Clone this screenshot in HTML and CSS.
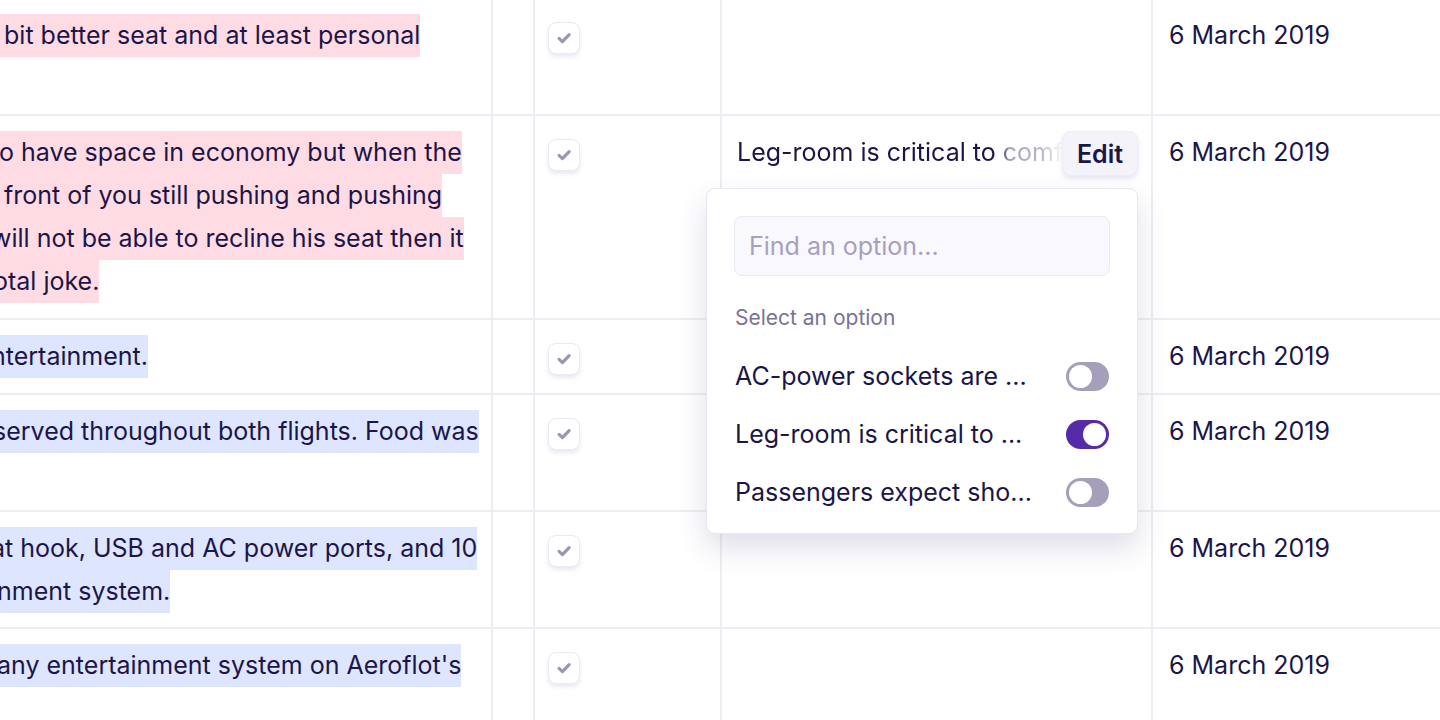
FILE: index.html
```html
<!DOCTYPE html>
<html lang="en">
<head>
<meta charset="utf-8">
<title>Reviews</title>
<link rel="stylesheet" href="styles.css">
</head>
<body>
<div class="table">
  <div class="row tight">
    <div class="cell quote"><div class="lines">
      <span class="ln pink">&nbsp;bit better seat and at least personal</span>
      <span class="ln blank">&nbsp;</span>
    </div></div>
    <div class="cell narrow"></div>
    <div class="cell check"><span class="box"><svg viewBox="0 0 16 16" width="18" height="18"><path d="M3.6 8.4 L6.6 11.2 L12.6 5" fill="none" stroke="#9c94b4" stroke-width="2.8" stroke-linecap="round" stroke-linejoin="round"/></svg></span></div>
    <div class="cell theme"></div>
    <div class="cell date">6 March 2019</div>
  </div>
  <div class="row">
    <div class="cell quote"><div class="lines">
      <span class="ln pink cut6">to have space in economy but when the</span>
      <span class="ln pink">&nbsp;front of you still pushing and pushing</span>
      <span class="ln pink cut6">will not be able to recline his seat then it</span>
      <span class="ln pink cut4">otal joke.</span>
    </div></div>
    <div class="cell narrow"></div>
    <div class="cell check"><span class="box"><svg viewBox="0 0 16 16" width="18" height="18"><path d="M3.6 8.4 L6.6 11.2 L12.6 5" fill="none" stroke="#9c94b4" stroke-width="2.8" stroke-linecap="round" stroke-linejoin="round"/></svg></span></div>
    <div class="cell theme active">
      <div class="theme-text">Leg-room is critical to comfort</div>
      <button class="edit">Edit</button>
      <div class="popover">
        <input class="search" type="text" placeholder="Find an option...">
        <div class="pop-label">Select an option</div>
        <div class="option"><span class="opt-text">AC-power sockets are ...</span><span class="toggle"></span></div>
        <div class="option"><span class="opt-text">Leg-room is critical to ...</span><span class="toggle on"></span></div>
        <div class="option"><span class="opt-text">Passengers expect sho...</span><span class="toggle"></span></div>
      </div>
    </div>
    <div class="cell date">6 March 2019</div>
  </div>
  <div class="row">
    <div class="cell quote"><div class="lines">
      <span class="ln blue cut6">ntertainment.</span>
    </div></div>
    <div class="cell narrow"></div>
    <div class="cell check"><span class="box"><svg viewBox="0 0 16 16" width="18" height="18"><path d="M3.6 8.4 L6.6 11.2 L12.6 5" fill="none" stroke="#9c94b4" stroke-width="2.8" stroke-linecap="round" stroke-linejoin="round"/></svg></span></div>
    <div class="cell theme"></div>
    <div class="cell date">6 March 2019</div>
  </div>
  <div class="row tight">
    <div class="cell quote"><div class="lines">
      <span class="ln blue cut4">served throughout both flights. Food was</span>
      <span class="ln blank">&nbsp;</span>
    </div></div>
    <div class="cell narrow"></div>
    <div class="cell check"><span class="box"><svg viewBox="0 0 16 16" width="18" height="18"><path d="M3.6 8.4 L6.6 11.2 L12.6 5" fill="none" stroke="#9c94b4" stroke-width="2.8" stroke-linecap="round" stroke-linejoin="round"/></svg></span></div>
    <div class="cell theme"></div>
    <div class="cell date">6 March 2019</div>
  </div>
  <div class="row tight">
    <div class="cell quote"><div class="lines">
      <span class="ln blue cut6">at hook, USB and AC power ports, and 10</span>
      <span class="ln blue">nment system.</span>
    </div></div>
    <div class="cell narrow"></div>
    <div class="cell check"><span class="box"><svg viewBox="0 0 16 16" width="18" height="18"><path d="M3.6 8.4 L6.6 11.2 L12.6 5" fill="none" stroke="#9c94b4" stroke-width="2.8" stroke-linecap="round" stroke-linejoin="round"/></svg></span></div>
    <div class="cell theme"></div>
    <div class="cell date">6 March 2019</div>
  </div>
  <div class="row tight">
    <div class="cell quote"><div class="lines">
      <span class="ln blue">any entertainment system on Aeroflot's</span>
      <span class="ln blank">&nbsp;</span>
    </div></div>
    <div class="cell narrow"></div>
    <div class="cell check"><span class="box"><svg viewBox="0 0 16 16" width="18" height="18"><path d="M3.6 8.4 L6.6 11.2 L12.6 5" fill="none" stroke="#9c94b4" stroke-width="2.8" stroke-linecap="round" stroke-linejoin="round"/></svg></span></div>
    <div class="cell theme"></div>
    <div class="cell date">6 March 2019</div>
  </div>
</div>
</body>
</html>
```
FILE: styles.css
```css
* { box-sizing: border-box; }
html, body {
  margin: 0;
  padding: 0;
  background: #ffffff;
  overflow: hidden;
  height: 720px;
}
body {
  font-family: Inter, "Noto Sans", "Liberation Sans", sans-serif;
  font-size: 25px;
  color: #1c1648;
}
.table {
  margin-top: -1px;
}
.row {
  display: grid;
  grid-template-columns: 493px 42px 187px 431px 1fr;
  border-bottom: 2px solid #eeedf3;
}
.cell {
  border-right: 2px solid #eeedf3;
  padding: 15px 0 15px 0;
  line-height: 43px;
  min-width: 0;
}
.row.tight .cell { padding-bottom: 14px; }
.cell:last-child { border-right: none; }
.quote {
  overflow: hidden;
}
.lines {
  margin-left: -3px;
  white-space: nowrap;
}
.ln {
  display: block;
  width: fit-content;
  height: 43px;
  line-height: 43px;
}
.cut4 { margin-left: -4px; }
.cut6 { margin-left: -6px; }
.pink { background: #ffdce4; }
.blue { background: #dde5ff; }
.blank { background: transparent; }

.row .check {
  padding: 23px 0 0 13px;
}
.box {
  display: flex;
  align-items: center;
  justify-content: center;
  width: 32px;
  height: 32px;
  border: 1.5px solid #ebe9f2;
  border-radius: 8px;
  background: #fff;
  box-shadow: 0 3px 4px rgba(90, 70, 150, 0.12);
}
.theme {
  padding-left: 15px;
  position: relative;
}
.theme-text {
  white-space: nowrap;
  overflow: hidden;
  width: 326px;
  -webkit-mask-image: linear-gradient(to right, #000 0px, #000 262px, rgba(0,0,0,0.4) 272px, rgba(0,0,0,0.3) 305px, transparent 326px);
  mask-image: linear-gradient(to right, #000 0px, #000 262px, rgba(0,0,0,0.4) 272px, rgba(0,0,0,0.3) 305px, transparent 326px);
}
.edit {
  position: absolute;
  top: 15px;
  right: 13px;
  height: 45px;
  width: 76px;
  padding: 0;
  font-family: inherit;
  font-size: 25px;
  font-weight: 600;
  color: #1c1648;
  background: #f4f3f9;
  border: 1px solid #efedf5;
  border-radius: 9px;
  box-shadow: 0 3px 5px rgba(90, 70, 150, 0.14);
}
.popover {
  position: absolute;
  top: 72px;
  left: -16px;
  width: 432px;
  height: 346px;
  background: #fff;
  border: 1.5px solid #e8e6ef;
  border-radius: 9px;
  box-shadow: 0 14px 30px rgba(60, 45, 110, 0.16);
  padding: 27px 27px 0 27px;
  display: flex;
  flex-direction: column;
  z-index: 5;
  line-height: normal;
}
.search {
  width: 100%;
  height: 60px;
  flex: none;
  border: 1.5px solid #ebe9f2;
  border-radius: 8px;
  background: #f9f8fc;
  font-family: inherit;
  font-size: 25px;
  padding: 0 14px;
  color: #1c1648;
  outline: none;
}
.search::placeholder { color: #a7a0be; }
.pop-label {
  margin-top: 30px;
  padding-left: 1px;
  font-size: 21px;
  line-height: 24px;
  color: #7a7295;
}
.option {
  display: flex;
  align-items: center;
  justify-content: space-between;
  height: 58px;
  flex: none;
  padding-left: 1px;
}
.pop-label + .option { margin-top: 17px; }
.opt-text { font-size: 25px; }
.toggle {
  position: relative;
  width: 43px;
  height: 29px;
  border-radius: 15px;
  background: #a69fba;
  margin-right: 1px;
}
.toggle::after {
  content: "";
  position: absolute;
  top: 3px;
  left: 3px;
  width: 23px;
  height: 23px;
  border-radius: 50%;
  background: #fff;
}
.toggle.on { background: #552ba8; }
.toggle.on::after { left: 17px; }
.date {
  padding-left: 16px;
}
```
